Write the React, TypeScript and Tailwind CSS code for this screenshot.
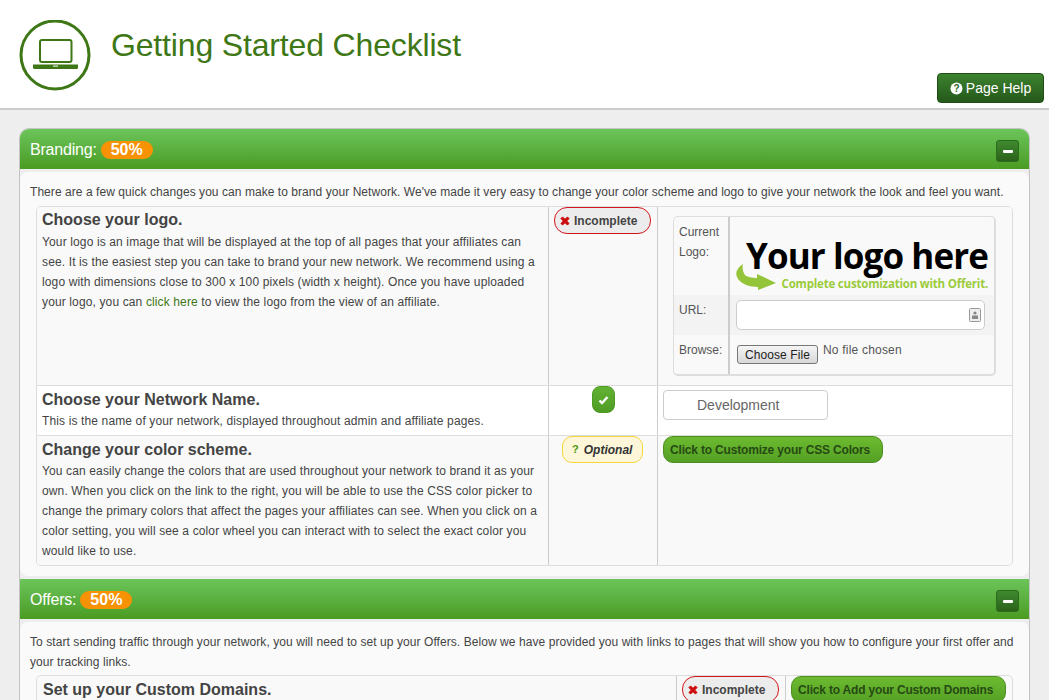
import React from "react";

const sans = "font-['Liberation_Sans',Arial,sans-serif]";
const headerGrad = "bg-gradient-to-b from-[#6cc55a] to-[#4a9b20]";

function Minus() {
  return (
    <div className="self-start mt-[11px] w-[23px] h-[22px] rounded-[3px] border border-[#2c6a1c] bg-gradient-to-b from-[#3f8a30] to-[#2b6219] flex items-center justify-center">
      <div className="w-[10px] h-[3px] rounded-[1px] bg-white" />
    </div>
  );
}

function SectionHeader({ title }: { title: string }) {
  return (
    <div className={`${headerGrad} h-[40px] flex items-center justify-between pl-[10px] pr-[10px] shrink-0`}>
      <div className="flex items-center gap-[4px] pt-[2px]">
        <span className="text-white text-[16px] tracking-[-0.2px]">{title}</span>
        <span className="bg-[#f79205] text-white font-bold text-[16px] leading-[18px] rounded-[9px] px-[10px]">50%</span>
      </div>
      <Minus />
    </div>
  );
}

function XIcon() {
  return (
    <svg width="12" height="12" viewBox="0 0 10 10" className="shrink-0">
      <path d="M1.6 3 L3 1.6 L5 3.6 L7 1.6 L8.4 3 L6.4 5 L8.4 7 L7 8.4 L5 6.4 L3 8.4 L1.6 7 L3.6 5 Z" fill="#cc0a0a" stroke="#cc0a0a" strokeWidth="0.8" strokeLinejoin="round" />
    </svg>
  );
}

function Incomplete() {
  return (
    <div className="inline-flex items-center gap-[3px] h-[27px] w-[97px] pl-[4px] rounded-[13px] border border-[#d0151b] bg-[#ececec] text-[#444] font-bold text-[12px]">
      <XIcon />
      <span>Incomplete</span>
    </div>
  );
}

function GreenButton({ children, w }: { children: React.ReactNode; w: string }) {
  return (
    <div className={`${w} h-[27px] flex items-center pl-[6px] rounded-[10px] border border-[#4c8e22] bg-gradient-to-b from-[#6dbb30] to-[#54a024] text-[#264a14] font-bold text-[12px] tracking-[-0.18px] whitespace-nowrap`}>
      {children}
    </div>
  );
}

function LaptopIcon() {
  return (
    <svg width="72" height="72" viewBox="0 0 72 72" className="shrink-0">
      <circle cx="36" cy="35" r="34" fill="none" stroke="#3e7715" strokeWidth="3" />
      <rect x="21" y="20" width="31.5" height="22" rx="2" fill="none" stroke="#3e7715" strokeWidth="2" />
      <path d="M14 44.5 H59 V47.5 a1.5 1.5 0 0 1 -1.5 1.5 H15.5 a1.5 1.5 0 0 1 -1.5 -1.5 Z" fill="#3e7715" />
      <rect x="34" y="45.6" width="5" height="1" fill="#ffffff" />
    </svg>
  );
}

function Logo() {
  return (
    <div className="flex flex-col h-[78px] pl-[6px] pr-[6px] pt-[24px]">
      <div className="font-['Open_Sans',sans-serif] font-bold text-[35px] leading-[30px] text-black tracking-[-0.9px] text-right whitespace-nowrap">Your logo here</div>
      <div className="flex items-center justify-between mt-[-7px]">
        <svg width="40" height="27" viewBox="0 0 40 27" className="shrink-0">
          <path d="M7 0 C1 4 -1 9 1 13 C4 20 14 23 22 23 L22 26 L40 19 L21 10 L21 14 C16 14 11 13 9 11 C7 8 6 4 7 0 Z" fill="#93c43a" />
        </svg>
        <span className="font-['Open_Sans',sans-serif] font-bold text-[11.5px] leading-[15px] text-[#9bcb3c] whitespace-nowrap pt-[12px] tracking-[-0.2px]">Complete customization with Offerit.</span>
      </div>
    </div>
  );
}

function LogoTable() {
  return (
    <div className="w-[323px] h-[160px] rounded-[5px] border border-[#ddd] border-r-2 border-b-2 bg-[#f9f9f9] overflow-hidden text-[12px] text-[#555] grid grid-cols-[56px_1fr] grid-rows-[78px_40px_1fr]">
      <div className="pl-[5px] pt-[5px] leading-[20px] border-r-2 border-[#ccc]">
        Current
        <br />
        Logo:
      </div>
      <Logo />
      <div className="bg-[#f3f3f3] pl-[5px] pt-[6px] border-r-2 border-[#ccc]">URL:</div>
      <div className="bg-[#f3f3f3] pl-[6px] pr-[9px] pt-[5px]">
        <div className="h-[30px] rounded-[5px] border border-[#ccc] bg-white flex items-center justify-end pr-[3px]">
          <svg width="12" height="14" viewBox="0 0 12 14">
            <rect x="0.5" y="0.5" width="11" height="13" rx="1" fill="#eee" stroke="#999" />
            <circle cx="6" cy="5" r="1.6" fill="#888" />
            <rect x="3" y="7.5" width="6" height="3.5" fill="#888" />
          </svg>
        </div>
      </div>
      <div className="pl-[5px] pt-[6px] border-r-2 border-[#ccc]">Browse:</div>
      <div className="pl-[7px] pt-[10px] flex items-start gap-[5px]">
        <div className="h-[19px] w-[81px] rounded-[3px] border border-[#777] bg-gradient-to-b from-[#f5f5f5] to-[#d8d8d8] text-[#222] flex items-center justify-center tracking-[0.1px]">Choose File</div>
        <span className="leading-[15px] -mt-[2px] tracking-[0.2px]">No file chosen</span>
      </div>
    </div>
  );
}

function Heading({ children }: { children: React.ReactNode }) {
  return <div className="text-[16px] leading-[18px] font-bold text-[#444] tracking-normal">{children}</div>;
}

const row = "grid grid-cols-[511px_110px_1fr]";
const mid = "border-l border-r border-[#ccc]";
const para = "tracking-[0.13px]";

export default function App() {
  return (
    <div className={`${sans} w-[1050px] h-[700px] overflow-hidden bg-white pr-[1px]`}>
      <div className="h-[110px] bg-white border-b-2 border-[#ccc] flex pl-[19px] pr-[5px]">
        <div className="pt-[20px]">
          <LaptopIcon />
        </div>
        <div className="pl-[20px] pt-[26px] text-[32px] leading-[38px] tracking-[-0.16px] text-[#3e7715] flex-1">Getting Started Checklist</div>
        <div className="pt-[73px]">
          <div className="w-[107px] h-[30px] rounded-[4px] border border-[#1f4d12] bg-gradient-to-b from-[#3c8230] to-[#25591a] text-white text-[14px] flex items-center justify-center gap-[3px]">
            <svg width="13" height="13" viewBox="0 0 13 13">
              <circle cx="6.5" cy="6.5" r="6" fill="#fff" />
              <text x="6.5" y="10" textAnchor="middle" fontSize="10" fontWeight="700" fill="#2d6a20" fontFamily="Liberation Sans">?</text>
            </svg>
            <span>Page Help</span>
          </div>
        </div>
      </div>
      <div className="bg-[#eeeeee] h-[590px] pt-[18px] pl-[19px] overflow-hidden">
        <div className="w-[1011px] rounded-t-[10px] overflow-hidden border-l border-r border-t border-[#c4c4c4] bg-[#eeeeee]">
          <SectionHeader title="Branding:" />
          <div className="mt-[3px] bg-[#fafafa] rounded-[8px] h-[404px] pl-[16px] pr-[16px] text-[12px] text-[#444]">
            <div className="-ml-[6px] pt-[11px] leading-[18px] h-[34px] whitespace-nowrap tracking-[0.055px]">
              There are a few quick changes you can make to brand your Network. We've made it very easy to change your color scheme and logo to give your network the look and feel you want.
            </div>
            <div className="w-[977px] h-[360px] rounded-[5px] border border-[#ddd] overflow-hidden">
              <div className={`${row} h-[178px] bg-[#f9f9f9]`}>
                <div className="pl-[5px] pt-[4px] leading-[20px]">
                  <Heading>Choose your logo.</Heading>
                  <div className={`${para} w-[496px] mt-[3px]`}>
                    Your logo is an image that will be displayed at the top of all pages that your affiliates can see. It is the easiest step you can take to brand your new network. We recommend using a logo with dimensions close to 300 x 100 pixels (width x height). Once you have uploaded your logo, you can <span className="text-[#3e7715]">click here</span> to view the logo from the view of an affiliate.
                  </div>
                </div>
                <div className={`${mid} pl-[5px]`}>
                  <Incomplete />
                </div>
                <div className="pl-[15px] pt-[9px]">
                  <LogoTable />
                </div>
              </div>
              <div className={`${row} h-[50px] bg-white border-t border-[#ddd]`}>
                <div className="pl-[5px] pt-[5px] leading-[20px]">
                  <Heading>Choose your Network Name.</Heading>
                  <div className={`${para} mt-[2px]`}>This is the name of your network, displayed throughout admin and affiliate pages.</div>
                </div>
                <div className={`${mid} flex justify-center`}>
                  <div className="w-[23px] h-[27px] rounded-[8px] border border-[#4c9a22] bg-gradient-to-b from-[#62b234] to-[#4f9c24] flex items-center justify-center">
                    <svg width="11" height="10" viewBox="0 0 11 10">
                      <path d="M1.5 5.5 L4 8 L9.5 2" fill="none" stroke="#fff" strokeWidth="2.4" />
                    </svg>
                  </div>
                </div>
                <div className="pl-[5px] pt-[4px]">
                  <div className="w-[165px] h-[30px] rounded-[4px] border border-[#ccc] bg-white text-[14px] text-[#666] flex items-center pl-[33px]">Development</div>
                </div>
              </div>
              <div className={`${row} h-[130px] bg-[#f9f9f9] border-t border-[#ddd]`}>
                <div className="pl-[5px] pt-[5px] leading-[20px]">
                  <Heading>Change your color scheme.</Heading>
                  <div className={`${para} w-[496px] mt-[2px]`}>
                    You can easily change the colors that are used throughout your network to brand it as your own. When you click on the link to the right, you will be able to use the CSS color picker to change the primary colors that affect the pages your affiliates can see. When you click on a color setting, you will see a color wheel you can interact with to select the exact color you would like to use.
                  </div>
                </div>
                <div className={`${mid} pl-[13px]`}>
                  <div className="w-[81px] h-[27px] rounded-[10px] border border-[#f5d63d] bg-[#fdf6d8] flex items-center pl-[9px] gap-[5px] font-bold text-[12px] text-[#333]">
                    <span className="text-[#4c9a10] text-[11px]">?</span>
                    <span className="italic">Optional</span>
                  </div>
                </div>
                <div className="pl-[5px]">
                  <GreenButton w="w-[220px]">Click to Customize your CSS Colors</GreenButton>
                </div>
              </div>
            </div>
          </div>
          <div className="mt-[3px]">
            <SectionHeader title="Offers:" />
          </div>
          <div className="mt-[3px] bg-[#fafafa] rounded-[8px] h-[200px] pl-[16px] pr-[16px] text-[12px] text-[#444]">
            <div className="-ml-[6px] pt-[10px] leading-[20px] h-[53px] w-[1000px] tracking-[0.07px]">
              To start sending traffic through your network, you will need to set up your Offers. Below we have provided you with links to pages that will show you how to configure your first offer and your tracking links.
            </div>
            <div className="w-[977px] h-[100px] rounded-[5px] border border-[#ddd] bg-[#f9f9f9] grid grid-cols-[639px_110px_1fr]">
              <div className="pl-[6px] pt-[5px]">
                <Heading>Set up your Custom Domains.</Heading>
              </div>
              <div className={`${mid} pl-[5px]`}>
                <Incomplete />
              </div>
              <div className="pl-[5px]">
                <GreenButton w="w-[215px]">Click to Add your Custom Domains</GreenButton>
              </div>
            </div>
          </div>
        </div>
      </div>
    </div>
  );
}
